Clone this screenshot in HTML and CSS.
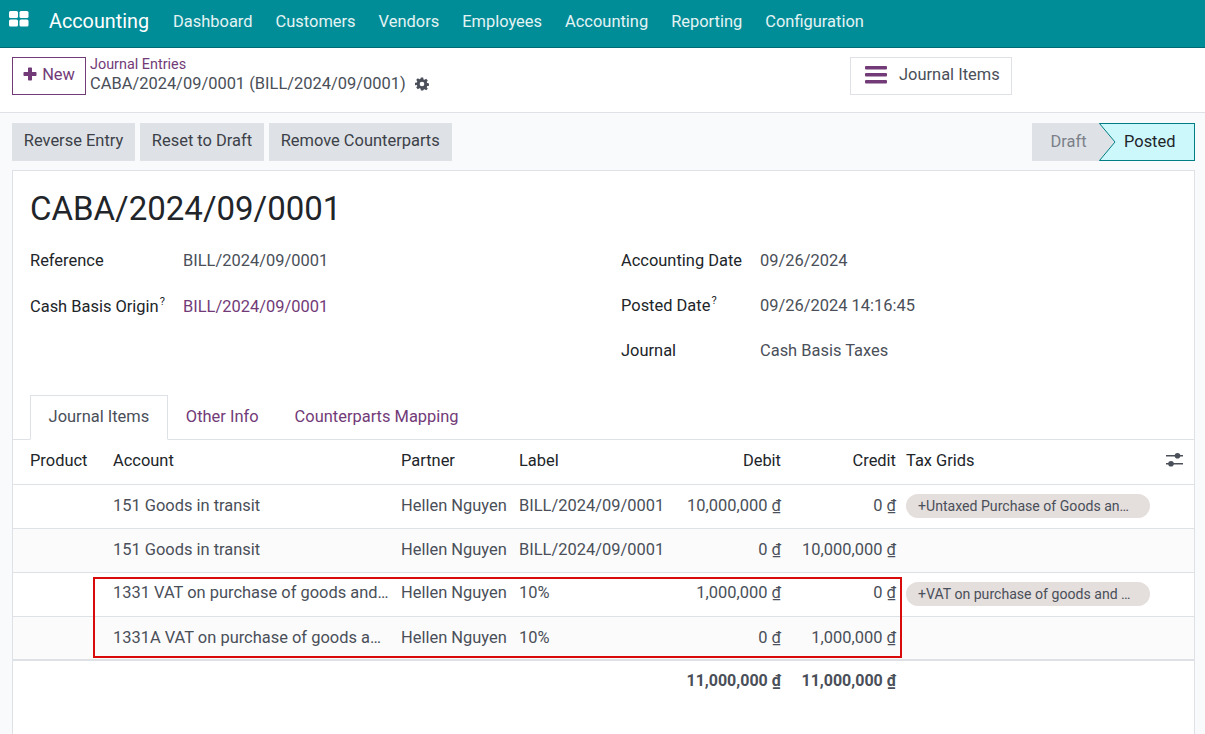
FILE: index.html
```html
<!DOCTYPE html>
<html lang="en">
<head>
    <meta charset="UTF-8">
    <title>Journal Entries</title>
    <link rel="stylesheet" href="styles.css">
</head>
<body>
    <nav class="navbar">
        <svg class="apps_icon" width="20" height="16" viewBox="0 0 20 16" fill="#ffffff">
            <rect x="0" y="0" width="9" height="7" rx="1.5"/>
            <rect x="10.5" y="0" width="9" height="7" rx="1.5"/>
            <rect x="0" y="8.5" width="9" height="7" rx="1.5"/>
            <rect x="10.5" y="8.5" width="9" height="7" rx="1.5"/>
        </svg>
        <span class="brand">Accounting</span>
        <a class="nav_link">Dashboard</a>
        <a class="nav_link">Customers</a>
        <a class="nav_link">Vendors</a>
        <a class="nav_link">Employees</a>
        <a class="nav_link">Accounting</a>
        <a class="nav_link">Reporting</a>
        <a class="nav_link">Configuration</a>
    </nav>

    <header class="control_panel">
        <button class="btn_new" type="button">
            <svg width="14" height="14" viewBox="0 0 14 14" fill="#723b78">
                <path d="M5 1.2c0-.4.3-.7.7-.7h2.6c.4 0 .7.3.7.7V5h3.8c.4 0 .7.3.7.7v2.6c0 .4-.3.7-.7.7H9v3.8c0 .4-.3.7-.7.7H5.700c-.4 0-.7-.3-.7-.7V9H1.200c-.4 0-.7-.3-.7-.7V5.700c0-.4.3-.7.7-.7H5z"/>
            </svg>
            New
        </button>
        <div class="breadcrumb">
            <a class="crumb_link">Journal Entries</a>
            <div class="crumb_current">
                CABA/2024/09/0001 (BILL/2024/09/0001)
                <svg class="gear" width="14" height="14" viewBox="0 0 24 24" fill="#4a4f59">
                    <path fill-rule="evenodd" d="M10 1h4l.6 3.100 1.900.8L19.100 3.100l2.800 2.800-1.800 2.600.8 1.900 3.100.6v4l-3.100.6-.8 1.900 1.800 2.600-2.800 2.800-2.600-1.800-1.900.8L14 23h-4l-.6-3.100-1.900-.8-2.600 1.800-2.800-2.800 1.800-2.600-.8-1.900L0 14v-4l3.100-.6.8-1.900-1.800-2.600 2.800-2.800 2.600 1.800 1.900-.8zM12 8a4 4 0 1 0 0 8 4 4 0 0 0 0-8z"/>
                </svg>
            </div>
        </div>
        <button class="btn_stat" type="button">
            <svg width="22" height="18" viewBox="0 0 22 18" fill="#723b78">
                <rect x="0" y="0" width="22" height="3.600" rx="1"/>
                <rect x="0" y="7" width="22" height="3.600" rx="1"/>
                <rect x="0" y="14" width="22" height="3.600" rx="1"/>
            </svg>
            Journal Items
        </button>
    </header>

    <div class="content">
        <div class="status_row">
            <div class="actions">
                <button class="btn_action" type="button">Reverse Entry</button>
                <button class="btn_action" type="button">Reset to Draft</button>
                <button class="btn_action" type="button">Remove Counterparts</button>
            </div>
            <div class="statusbar">
                <span class="status_draft">Draft</span>
                <span class="status_posted">
                    <svg class="status_arrow" width="17" height="38" viewBox="0 0 17 38">
                        <path d="M0 0 L16 19 L0 38" fill="#dee2e6"/>
                        <path d="M0.500 0.500 L16 19 L0.500 37.500" fill="none" stroke="#017e84"/>
                    </svg>
                    Posted
                </span>
            </div>
        </div>

        <main class="sheet">
            <h1 class="title">CABA/2024/09/0001</h1>

            <div class="groups">
                <div class="group_left">
                    <div class="field">
                        <label class="field_label">Reference</label>
                        <span class="field_value">BILL/2024/09/0001</span>
                    </div>
                    <div class="field">
                        <label class="field_label">Cash Basis Origin<sup>?</sup></label>
                        <a class="field_value field_link">BILL/2024/09/0001</a>
                    </div>
                </div>
                <div class="group_right">
                    <div class="field">
                        <label class="field_label">Accounting Date</label>
                        <span class="field_value">09/26/2024</span>
                    </div>
                    <div class="field">
                        <label class="field_label">Posted Date<sup>?</sup></label>
                        <span class="field_value">09/26/2024 14:16:45</span>
                    </div>
                    <div class="field">
                        <label class="field_label">Journal</label>
                        <span class="field_value">Cash Basis Taxes</span>
                    </div>
                </div>
            </div>

            <ul class="tabs">
                <li class="tab tab_active">Journal Items</li>
                <li class="tab">Other Info</li>
                <li class="tab">Counterparts Mapping</li>
            </ul>

            <div class="table_wrap">
                <table class="lines">
                    <colgroup>
                        <col class="col_product">
                        <col class="col_account">
                        <col class="col_partner">
                        <col class="col_label">
                        <col class="col_debit">
                        <col class="col_credit">
                        <col>
                    </colgroup>
                    <thead>
                        <tr>
                            <th class="first">Product</th>
                            <th>Account</th>
                            <th>Partner</th>
                            <th>Label</th>
                            <th class="num">Debit</th>
                            <th class="num">Credit</th>
                            <th class="tax_head">
                                <div class="tax_head_inner">
                                    Tax Grids
                                    <svg width="17" height="16" viewBox="0 0 17 16" fill="#4a4f59">
                                        <rect x="0" y="3" width="17" height="1.500"/>
                                        <rect x="0" y="11" width="17" height="1.500"/>
                                        <circle cx="11.500" cy="3.700" r="2.800"/>
                                        <circle cx="5" cy="11.700" r="2.800"/>
                                    </svg>
                                </div>
                            </th>
                        </tr>
                    </thead>
                    <tbody>
                        <tr>
                            <td class="first"></td>
                            <td>151 Goods in transit</td>
                            <td>Hellen Nguyen</td>
                            <td>BILL/2024/09/0001</td>
                            <td class="num">10,000,000 <u>₫</u></td>
                            <td class="num">0 <u>₫</u></td>
                            <td class="tax"><span class="pill">+Untaxed Purchase of Goods an…</span></td>
                        </tr>
                        <tr>
                            <td class="first"></td>
                            <td>151 Goods in transit</td>
                            <td>Hellen Nguyen</td>
                            <td>BILL/2024/09/0001</td>
                            <td class="num">0 <u>₫</u></td>
                            <td class="num">10,000,000 <u>₫</u></td>
                            <td class="tax"></td>
                        </tr>
                        <tr class="row_tight">
                            <td class="first"></td>
                            <td class="account_clip">1331 VAT on purchase of goods and…</td>
                            <td>Hellen Nguyen</td>
                            <td>10%</td>
                            <td class="num">1,000,000 <u>₫</u></td>
                            <td class="num">0 <u>₫</u></td>
                            <td class="tax"><span class="pill">+VAT on purchase of goods and …</span></td>
                        </tr>
                        <tr class="row_low">
                            <td class="first"></td>
                            <td class="account_clip">1331A VAT on purchase of goods a…</td>
                            <td>Hellen Nguyen</td>
                            <td>10%</td>
                            <td class="num">0 <u>₫</u></td>
                            <td class="num">1,000,000 <u>₫</u></td>
                            <td class="tax"></td>
                        </tr>
                    </tbody>
                    <tfoot>
                        <tr>
                            <td colspan="4"></td>
                            <td class="num">11,000,000 <u>₫</u></td>
                            <td class="num">11,000,000 <u>₫</u></td>
                            <td></td>
                        </tr>
                    </tfoot>
                </table>
                <div class="highlight_box"></div>
            </div>
        </main>
    </div>
</body>
</html>
```
FILE: styles.css
```css
* {
    box-sizing: border-box;
}
html, body {
    height: 100%;
}
body {
    margin: 0;
    font-family: Roboto, "Liberation Sans", sans-serif;
    font-size: 16.45px;
    color: #4a4f59;
    background: #f9fafb;
    overflow: hidden;
}
button {
    font-family: inherit;
    font-size: 16.45px;
    cursor: pointer;
}

/* top bar */
.navbar {
    height: 48px;
    display: flex;
    align-items: center;
    padding: 0 0 4px 9px;
    background: #018d98;
    border-bottom: 1px solid #016a72;
    color: #ffffff;
}
.apps_icon {
    margin-right: 20px;
    margin-top: -6px;
}
.brand {
    font-size: 19.8px;
    margin-right: 24px;
}
.nav_link {
    margin-right: 23px;
    color: #e4f3f4;
}

/* control panel */
.control_panel {
    height: 65px;
    display: flex;
    align-items: center;
    padding: 0 12px 8px 12px;
    background: #ffffff;
    border-bottom: 1px solid #dee2e6;
}
.btn_new {
    width: 74px;
    height: 38px;
    margin-right: 4px;
    padding: 0 0 4px 0;
    background: #ffffff;
    border: 1px solid #723b78;
    color: #723b78;
}
.btn_new svg {
    vertical-align: -1px;
    margin-right: 1px;
}
.breadcrumb {
    width: 760px;
    padding-bottom: 2px;
    line-height: 20px;
}
.crumb_link {
    display: block;
    font-size: 14.4px;
    color: #723b78;
    height: 18px;
    line-height: 18px;
}
.crumb_current {
    display: flex;
    align-items: center;
    gap: 9px;
    margin-top: -1px;
    line-height: 22px;
}
.btn_stat {
    width: 162px;
    height: 38px;
    display: flex;
    align-items: center;
    gap: 12px;
    padding: 0 0 3px 14px;
    background: #ffffff;
    border: 1px solid #dee2e6;
    color: #4a4f59;
}

/* status row */
.content {
    padding: 10px 10px 0 12px;
}
.status_row {
    display: flex;
    justify-content: space-between;
    height: 38px;
}
.actions {
    display: flex;
    gap: 5px;
}
.btn_action {
    height: 38px;
    padding: 0 11.8px 3px 11.8px;
    background: #dee2e6;
    border: 0;
    color: #3c4048;
}
.statusbar {
    display: flex;
    height: 38px;
}
.status_draft {
    width: 67px;
    display: flex;
    align-items: center;
    justify-content: center;
    padding: 0 0 2px 6px;
    background: #dee2e6;
    color: #7b8089;
}
.status_posted {
    position: relative;
    width: 96px;
    display: flex;
    align-items: center;
    padding: 0 0 2px 25px;
    background: #ccf7fb;
    border: 1px solid #017e84;
    border-left: 0;
    color: #212529;
}
.status_arrow {
    position: absolute;
    left: 0;
    top: -1px;
}

/* form sheet */
.sheet {
    margin-top: 9px;
    height: 600px;
    background: #ffffff;
    border: 1px solid #dee2e6;
    border-bottom: 0;
}
.title {
    margin: 0;
    padding: 18px 0 0 17px;
    font-size: 33px;
    line-height: 40px;
    font-weight: 400;
    color: #212529;
}
.groups {
    display: flex;
    padding: 19px 0 0 17px;
    height: 166px;
}
.group_left {
    width: 591px;
}
.field {
    display: flex;
    align-items: center;
    height: 24px;
    margin-bottom: 21px;
}
.group_left .field {
    margin-bottom: 22px;
}
.field_label {
    color: #212529;
}
.group_left .field_label {
    width: 153px;
}
.group_right .field_label {
    width: 139px;
}
.field_label sup {
    font-size: 11px;
    line-height: 0;
    margin-left: 1px;
}
.field_link {
    color: #723b78;
}

/* tabs */
.tabs {
    display: flex;
    height: 45px;
    margin: 0;
    padding: 0 0 0 17px;
    list-style: none;
    border-bottom: 1px solid #dee2e6;
}
.tab {
    height: 45px;
    padding: 0 18px;
    line-height: 43px;
    color: #723b78;
}
.tab_active {
    padding: 0 17.6px;
    background: #ffffff;
    border: 1px solid #dee2e6;
    border-bottom: 1px solid #ffffff;
    line-height: 41px;
    color: #4a4f59;
}

/* lines table */
.table_wrap {
    position: relative;
}
.lines {
    width: 100%;
    table-layout: fixed;
    border-collapse: collapse;
}
.col_product {
    width: 88px;
}
.col_account {
    width: 288px;
}
.col_partner {
    width: 118px;
}
.col_label {
    width: 168px;
}
.col_debit {
    width: 118px;
}
.col_credit {
    width: 107px;
}
.lines th {
    height: 44px;
    padding: 0 12px 3px 12px;
    text-align: left;
    font-weight: 400;
    color: #212529;
    border-bottom: 1px solid #dee2e6;
}
.lines td {
    height: 44px;
    padding: 0 12px 1px 12px;
    white-space: nowrap;
    border-bottom: 1px solid #dee2e6;
}
.lines th.first,
.lines td.first {
    padding-left: 17px;
}
.lines th.num,
.lines td.num {
    padding-left: 0;
    text-align: right;
}
.lines th.num:nth-child(6),
.lines td.num:nth-child(6) {
    padding-right: 4px;
}
.lines tbody tr:nth-child(even) {
    background: #fbfbfb;
}
.lines .row_tight td {
    padding-bottom: 3px;
}
.lines .row_low td {
    padding-bottom: 1px;
}
.lines td.account_clip {
    padding-right: 0;
}
.lines th.tax_head,
.lines td.tax {
    padding: 0 0 0 6px;
}
.lines th.tax_head {
    padding-bottom: 3px;
}
.tax_head_inner {
    display: flex;
    justify-content: space-between;
    align-items: center;
    padding-right: 11px;
}
.pill {
    display: block;
    width: 244px;
    height: 24px;
    padding-left: 12px;
    line-height: 25px;
    font-size: 14.1px;
    border-radius: 12px;
    background: #e4dedd;
    overflow: hidden;
    white-space: nowrap;
}
.lines tfoot td {
    height: 42px;
    padding-bottom: 3px;
    font-size: 16px;
    font-weight: 700;
    border-top: 2px solid #dee2e6;
    border-bottom: 0;
}
.lines tfoot td.num:nth-child(3) {
    padding-right: 4px;
}

/* red annotation around the VAT rows */
.highlight_box {
    position: absolute;
    left: 80px;
    top: 137px;
    width: 809px;
    height: 81px;
    border: 2px solid #d80a0a;
    pointer-events: none;
}
```
